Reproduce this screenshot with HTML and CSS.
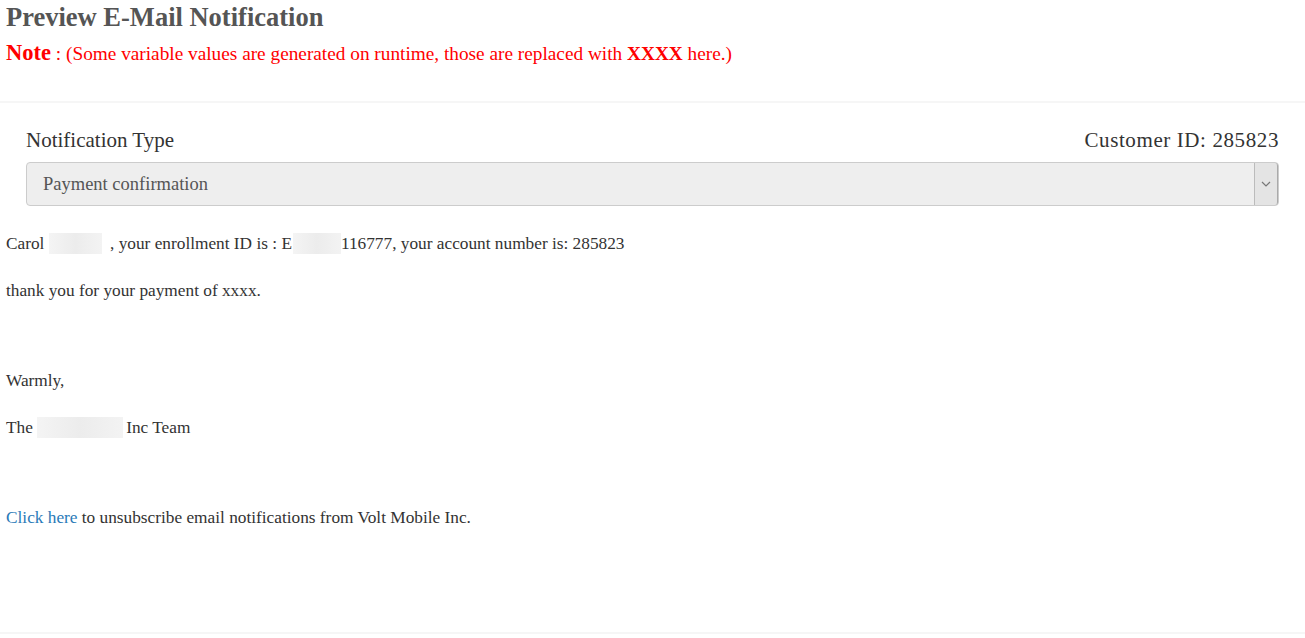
FILE: index.html
```html
<html>
  <head>
    <title>Preview E-Mail Notification</title>
    <link rel="stylesheet" href="styles.css">
  </head>
  <body>
    <div class="header">
      <h1>Preview E-Mail Notification</h1>
      <p class="note"><b class="note-label">Note</b> : (Some variable values are generated on runtime, those are replaced with <b>XXXX</b> here.)</p>
    </div>
    <hr class="rule">
    <div class="form">
      <div class="form-head">
        <span>Notification Type</span>
        <span>Customer ID: 285823</span>
      </div>
      <div class="select">
        <span class="select-value">Payment confirmation</span>
        <span class="select-arrow">
          <svg width="10" height="6" viewBox="0 0 10 6"><path d="M1 1 L5 5 L9 1" fill="none" stroke="#777" stroke-width="1.2"/></svg>
        </span>
      </div>
    </div>
    <div class="mail">
      <p>Carol <span class="blur name"></span> , your enrollment ID is : E<span class="blur eid"></span>116777, your account number is: 285823</p>
      <p>thank you for your payment of xxxx.</p>
      <p class="gap">Warmly,</p>
      <p>The <span class="blur company"></span>Inc Team</p>
      <p class="gap"><a href="#">Click here</a> to unsubscribe email notifications from Volt Mobile Inc.</p>
    </div>
    <hr class="rule bottom">
  </body>
</html>
```

FILE: styles.css
```css
body {
  margin: 0;
  padding: 0 6px;
  font-family: "Liberation Serif", "Times New Roman", serif;
  color: #333;
  background: #fff;
}
h1 {
  margin: 0;
  padding-top: 2px;
  font-size: 26.5px;
  line-height: 30px;
  color: #555;
}
.note {
  margin: 8px 0 0;
  font-size: 19.3px;
  line-height: 26px;
  color: #f00;
}
.note-label {
  font-size: 22.5px;
}
.rule {
  margin: 34px -6px 0;
  border: 0;
  border-top: 2px solid #f6f6f6;
}
.rule.bottom {
  margin-top: 103px;
}
.form {
  padding: 23px 20px 0;
}
.form-head {
  display: flex;
  justify-content: space-between;
  font-size: 21px;
  line-height: 28px;
  color: #333;
  padding-bottom: 8px;
}
.form-head span:last-child {
  letter-spacing: 0.6px;
}
.select {
  display: flex;
  height: 42px;
  border: 1px solid #ccc;
  border-radius: 4px;
  background: #eee;
  color: #555;
  font-size: 18.5px;
}
.select-value {
  flex: 1;
  padding-left: 16px;
  line-height: 42px;
}
.select-arrow {
  display: flex;
  align-items: center;
  justify-content: center;
  width: 22px;
  border-left: 1px solid #bbb;
  background: #e4e4e4;
  border-radius: 0 3px 3px 0;
  border-right: 1px solid #aaa;
}
.mail {
  padding-top: 27px;
  font-size: 17.3px;
}
.mail p {
  margin: 0 0 25px;
  line-height: 22px;
}
.mail p.gap {
  margin-top: 68px;
}
.mail a {
  color: #2a7ab8;
  text-decoration: none;
}
.blur {
  display: inline-block;
  height: 21px;
  vertical-align: -5px;
  background: linear-gradient(90deg, #f4f4f4, #ececec 50%, #f3f3f3);
}
.name {
  width: 53px;
  margin: 0 4px 0 0;
}
.eid {
  width: 48px;
  margin-left: 1px;
}
.company {
  width: 86px;
  margin-left: 0;
  margin-right: 3px;
}
```
